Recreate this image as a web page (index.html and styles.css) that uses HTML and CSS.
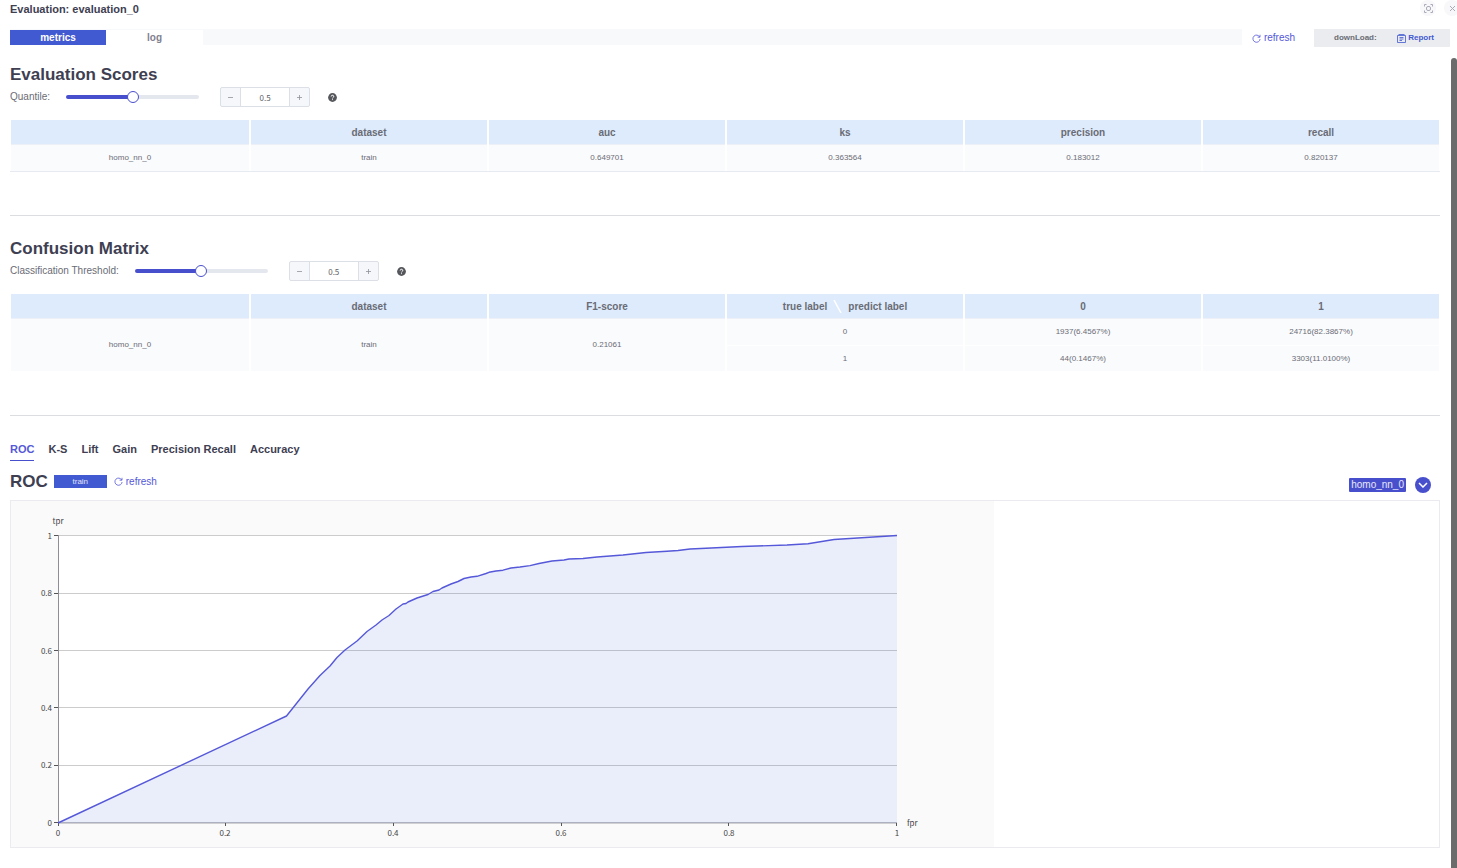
FILE: index.html
```html
<!DOCTYPE html>
<html lang="en">
<head>
<meta charset="utf-8">
<title>Evaluation: evaluation_0</title>
<link rel="stylesheet" href="styles.css">
</head>
<body>
<div class="page">
  <header class="title-bar">
    <h1 class="title">Evaluation: evaluation_0</h1>
    <div class="window-actions">
      <button class="round-btn" aria-label="Full screen"><svg width="9" height="9" viewBox="0 0 9 9"><path d="M.5 2.500v-2h2M6.500 .5h2v2M8.500 6.500v2h-2M2.500 8.500h-2v-2"/><rect x="2.500" y="2.500" width="4" height="4" rx="1.500"/></svg></button>
      <button class="round-btn" aria-label="Close"><svg width="7" height="7" viewBox="0 0 7 7"><path d="M1 1l5 5M6 1l-5 5"/></svg></button>
    </div>
  </header>

  <div class="toolbar">
    <nav class="main-tabs">
      <button class="main-tab active">metrics</button>
      <button class="main-tab">log</button>
    </nav>
    <button class="refresh"><svg width="9" height="9" viewBox="0 0 9 9"><path d="M7.700 3A3.600 3.600 0 1 0 8.100 5M8 .8v2.400H5.600"/></svg>refresh</button>
    <div class="download">
      <span>downLoad:</span>
      <button class="report"><svg width="9" height="9" viewBox="0 0 9 9"><path d="M.5 1.500h8v7h-8zM1.500 .5h6M2.500 3.500h4M2.500 5h4M2.500 6.500h2.500"/></svg>Report</button>
    </div>
  </div>

  <main class="content">
    <section class="block">
      <h2 class="heading">Evaluation Scores</h2>
      <div class="control">
        <label for="quantile">Quantile:</label>
        <input class="slider" id="quantile" type="range" min="0" max="1" step="0.01" value="0.5">
        <div class="stepper">
          <button aria-label="Decrease quantile"><svg width="7" height="7" viewBox="0 0 7 7"><path d="M1 3.500h5"/></svg></button>
          <input type="text" aria-label="Quantile value" value="0.5">
          <button aria-label="Increase quantile"><svg width="7" height="7" viewBox="0 0 7 7"><path d="M1 3.500h5M3.500 1v5"/></svg></button>
        </div>
        <button class="help" aria-label="Help"><svg width="9" height="9" viewBox="0 0 9 9"><circle cx="4.500" cy="4.500" r="4.400"/><path d="M3.200 3.500a1.300 1.200 0 1 1 1.900 1q-.6.3-.6.9M4.500 6.300v.8"/></svg></button>
      </div>
      <table class="grid underlined">
        <thead><tr><th class="name-col"></th><th>dataset</th><th>auc</th><th>ks</th><th>precision</th><th>recall</th></tr></thead>
        <tbody><tr><td>homo_nn_0</td><td>train</td><td>0.649701</td><td>0.363564</td><td>0.183012</td><td>0.820137</td></tr></tbody>
      </table>
    </section>

    <section class="block">
      <h2 class="heading">Confusion Matrix</h2>
      <div class="control">
        <label for="threshold">Classification Threshold:</label>
        <input class="slider" id="threshold" type="range" min="0" max="1" step="0.01" value="0.5">
        <div class="stepper">
          <button aria-label="Decrease threshold"><svg width="7" height="7" viewBox="0 0 7 7"><path d="M1 3.500h5"/></svg></button>
          <input type="text" aria-label="Threshold value" value="0.5">
          <button aria-label="Increase threshold"><svg width="7" height="7" viewBox="0 0 7 7"><path d="M1 3.500h5M3.500 1v5"/></svg></button>
        </div>
        <button class="help" aria-label="Help"><svg width="9" height="9" viewBox="0 0 9 9"><circle cx="4.500" cy="4.500" r="4.400"/><path d="M3.200 3.500a1.300 1.200 0 1 1 1.900 1q-.6.3-.6.9M4.500 6.300v.8"/></svg></button>
      </div>
      <table class="grid">
        <thead><tr><th class="name-col"></th><th>dataset</th><th>F1-score</th><th><div class="split-label">true label<svg width="9" height="13" viewBox="0 0 9 13"><path d="M1 0l7 13"/></svg>predict label</div></th><th>0</th><th>1</th></tr></thead>
        <tbody>
          <tr><td rowspan="2">homo_nn_0</td><td rowspan="2">train</td><td rowspan="2">0.21061</td><td class="split">0</td><td class="split">1937(6.4567%)</td><td class="split">24716(82.3867%)</td></tr>
          <tr class="last"><td>1</td><td>44(0.1467%)</td><td>3303(11.0100%)</td></tr>
        </tbody>
      </table>
    </section>

    <section>
      <nav class="curve-tabs">
        <button class="curve-tab active">ROC</button>
        <button class="curve-tab">K-S</button>
        <button class="curve-tab">Lift</button>
        <button class="curve-tab">Gain</button>
        <button class="curve-tab">Precision Recall</button>
        <button class="curve-tab">Accuracy</button>
      </nav>
      <div class="curve-bar">
        <h2 class="heading">ROC</h2>
        <button class="dataset">train</button>
        <button class="refresh"><svg width="9" height="9" viewBox="0 0 9 9"><path d="M7.700 3A3.600 3.600 0 1 0 8.100 5M8 .8v2.400H5.600"/></svg>refresh</button>
        <div class="models">
          <span class="model">homo_nn_0</span>
          <button class="expand" aria-label="Show models"><svg width="10" height="6" viewBox="0 0 10 6"><path d="M1 1l4 4 4-4"/></svg></button>
        </div>
      </div>
      <div class="chart">
        <svg class="plot" width="983" height="346" viewBox="11 501 983 346" role="img" aria-label="ROC curve">
          <rect class="plot-area" x="58" y="535" width="839" height="288"/>
          <path class="gridline" d="M58 535.500H897M58 593.500H897M58 650.500H897M58 707.500H897M58 765.500H897"/>
          <path class="axis" d="M58.500 535V823M58 822.900H897"/>
          <path class="tick" d="M54 535.500h4M54 593.500h4M54 650.500h4M54 707.500h4M54 765.500h4M54 822.500h4M58.500 823v3M225.500 823v3M393.500 823v3M561.500 823v3M728.500 823v3M896.500 823v3"/>
          <path class="area" d="M58 823L286.500 716 308 689 320 675.500 330 666 337 657.500 345 650 357 641 367 631.500 376 625 382 620 389 615.500 396 609 403 604 406 603.500 408 602 417 598 428 594.500 433 591.500 439 590 442 588 451 584 458 581.500 464 578.500 471 577 477 576.300 486 573.500 489 572.300 496 571 503 570.200 511 568 520 567 530 565.600 539 563.500 552 561 564 560 569 559 583 558.500 597 557 623 555 646 552.500 667 551.300 678 550.500 690 549 706 548.200 742 546.500 787 545 808 543.700 834 539.500 897 535.500V823Z"/>
          <path class="curve" d="M58 823L286.500 716 308 689 320 675.500 330 666 337 657.500 345 650 357 641 367 631.500 376 625 382 620 389 615.500 396 609 403 604 406 603.500 408 602 417 598 428 594.500 433 591.500 439 590 442 588 451 584 458 581.500 464 578.500 471 577 477 576.300 486 573.500 489 572.300 496 571 503 570.200 511 568 520 567 530 565.600 539 563.500 552 561 564 560 569 559 583 558.500 597 557 623 555 646 552.500 667 551.300 678 550.500 690 549 706 548.200 742 546.500 787 545 808 543.700 834 539.500 897 535.500"/>
          <g class="labels end"><text x="52" y="539">1</text><text x="52" y="596">0.8</text><text x="52" y="654">0.6</text><text x="52" y="711">0.4</text><text x="52" y="768">0.2</text><text x="52" y="826">0</text></g>
          <g class="labels middle"><text x="58" y="836">0</text><text x="225" y="836">0.2</text><text x="393" y="836">0.4</text><text x="561" y="836">0.6</text><text x="729" y="836">0.8</text><text x="897" y="836">1</text><text x="58" y="524">tpr</text></g>
          <g class="labels"><text x="907" y="826">fpr</text></g>
        </svg>
      </div>
    </section>
  </main>
  <div class="scroll-thumb"></div>
</div>
</body>
</html>
```
FILE: styles.css
```css
* { box-sizing: border-box; }
body {
  margin: 0;
  background: #fff;
  color: #6a6c75;
  font: 10px/12px "Liberation Sans", Arial, sans-serif;
  overflow-x: hidden;
}
button { margin: 0; padding: 0; border: 0; background: none; color: inherit; font: inherit; cursor: pointer; }
svg { display: block; flex: none; fill: none; stroke: currentColor; }
h1, h2 { margin: 0; color: #3e4052; }

.title-bar { display: flex; justify-content: space-between; height: 29px; padding-left: 10px; overflow: hidden; }
.title { font-size: 11px; line-height: 18px; }
.window-actions { display: flex; gap: 8px; height: 16px; }
.round-btn {
  display: grid;
  place-items: center;
  width: 16px;
  height: 16px;
  border-radius: 50%;
  background: #f8f8fa;
  color: #a9abb8;
}
.round-btn:last-child { margin-right: -3px; }

.toolbar { display: flex; align-items: flex-start; height: 35px; padding: 0 7px 0 10px; }
.main-tabs { display: flex; flex: 1; height: 16px; padding-top: 1px; background: #f8f9fb; margin-right: 10px; }
.main-tab { width: 97px; height: 15px; background: #fff; color: #7f8090; font-weight: bold; }
.main-tab.active { width: 96px; background: #4159d1; color: #fff; }
.refresh { display: flex; align-items: center; gap: 3px; color: #5558d8; }
.refresh svg { stroke-width: 0.800; }
.toolbar .refresh { height: 18px; margin-right: 19px; }
.download {
  display: flex;
  align-items: center;
  justify-content: space-between;
  width: 136px;
  height: 18px;
  padding: 0 16px 0 20px;
  background: #ebecf0;
  font-size: 8px;
  font-weight: bold;
}
.report { display: flex; align-items: center; gap: 2px; color: #4159d1; }
.report svg { stroke-width: 0.800; }

.content { padding: 0 17px 20px 10px; }
.heading { font-size: 17px; line-height: 22px; }
.block { height: 152px; margin-bottom: 22px; border-bottom: 1px solid #dcdde0; }
.block + .block { height: 178px; margin-bottom: 27px; }
.control { display: flex; align-items: center; height: 22px; }
.slider {
  appearance: none;
  width: 133px;
  height: 12px;
  margin: 0 21px 0 16px;
  background: none;
}
.slider::-webkit-slider-runnable-track {
  height: 4px;
  border-radius: 2px;
  background: linear-gradient(to right, #484fcd 50%, #e4e7ed 50%);
}
.slider::-webkit-slider-thumb {
  appearance: none;
  width: 12px;
  height: 12px;
  margin-top: -4px;
  border: 1px solid #484fcd;
  border-radius: 50%;
  background: #fff;
}
.stepper {
  display: flex;
  width: 90px;
  height: 20px;
  border: 1px solid #dcdfe6;
  border-radius: 2px;
  background: #f5f7fa;
  overflow: hidden;
}
.stepper button { display: grid; place-items: center; width: 19px; color: #8f929a; }
.stepper svg { stroke-width: 0.800; }
.stepper input {
  flex: 1;
  min-width: 0;
  padding: 0;
  border: solid #dcdfe6;
  border-width: 0 1px;
  background: #fff;
  color: #606266;
  font: 8px "Noto Sans CJK SC", sans-serif;
  text-align: center;
}
.help { margin-left: 18px; color: #55575c; }
.help circle { fill: currentColor; stroke: none; }
.help path { stroke: #fff; }

.grid { width: 100%; margin-top: 12px; border-collapse: separate; border-spacing: 0; table-layout: fixed; text-align: center; }
.grid th, .grid td { padding: 0; border: solid #fff; border-width: 0 1px; }
.grid th { height: 25px; background: #deebfc; box-shadow: inset 0 -1px #edf0f7; }
.grid .name-col { width: 240px; }
.grid td { height: 26px; background: #fafbfd; font-size: 8px; }
.grid .split { border-bottom: 1px solid #fff; height: 27px; }
.grid .last td { height: 25px; }
.underlined { border-bottom: 1px solid #e8eaf1; }
.split-label { display: flex; align-items: center; justify-content: center; gap: 6px; }
.split-label svg { stroke: #fff; stroke-width: 1.500; }

.curve-tabs { display: flex; gap: 14px; height: 18px; }
.curve-tab { border-bottom: 1px solid transparent; padding-bottom: 6px; color: #3e4052; font-size: 11px; font-weight: bold; }
.curve-tab.active { border-color: #484fcd; color: #5558d8; }
.curve-bar { display: flex; align-items: center; height: 39px; padding-top: 2px; }
.dataset { width: 53px; height: 13px; margin: 0 7px 0 6px; background: #4159d1; color: #e0e4fa; font-size: 8px; }
.models { display: flex; align-items: center; gap: 9px; margin: 6px 9px 0 auto; }
.model { height: 14px; padding: 0 2px; border-radius: 1px; background: #484fcd; color: #e6e7fa; line-height: 14px; }
.expand { display: grid; place-items: center; width: 16px; height: 16px; border-radius: 50%; background: #484fcd; color: #fff; }
.expand svg { stroke-width: 1.500; }

.chart { border: 1px solid #ebebef; }
.plot { background: #fafafa; max-width: 100%; }
.plot-area { fill: #fff; stroke: none; }
.gridline { stroke: #ccc; }
.axis { stroke: #8e8f96; }
.tick { stroke: #555; }
.area { fill: #4159d1; fill-opacity: 0.110; stroke: none; }
.curve { stroke: #5558d8; stroke-width: 1.400; stroke-linejoin: round; }
.labels { fill: #444; stroke: none; font: 8px "Noto Sans CJK SC", sans-serif; }
.end { text-anchor: end; }
.middle { text-anchor: middle; }
.scroll-thumb { position: fixed; top: 58px; right: 0; bottom: 0; width: 6px; border-radius: 3px 3px 0 0; background: #6b6b6b; }
```
